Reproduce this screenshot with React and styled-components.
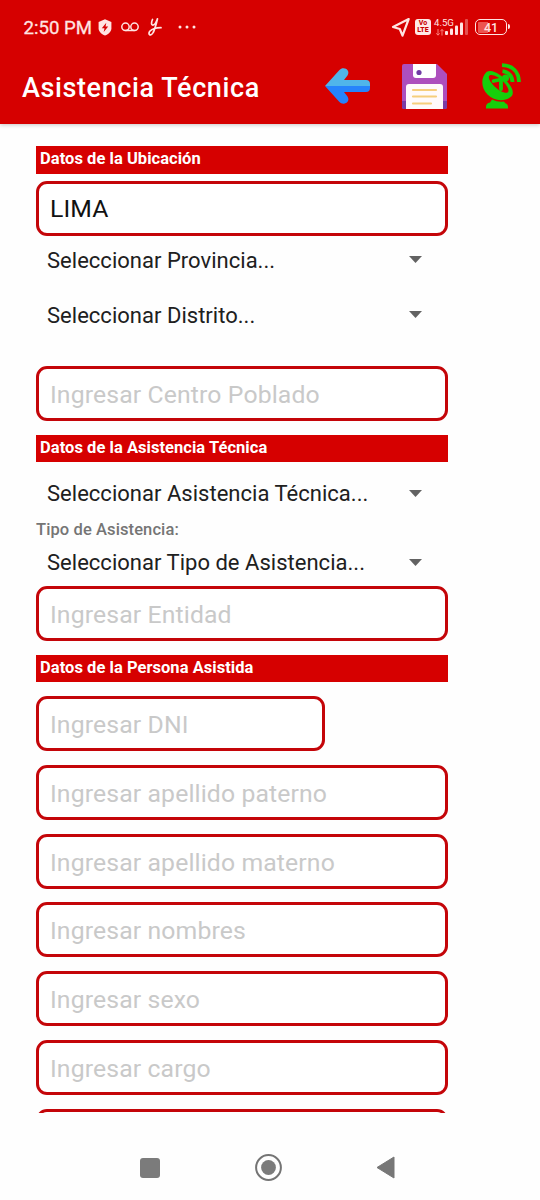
import React from "react";
import styled, { createGlobalStyle } from "styled-components";

const GlobalStyle = createGlobalStyle`
  *, *::before, *::after { box-sizing: border-box; }
  body { margin: 0; background: #fefefe; font-family: Roboto, "Liberation Sans", sans-serif; }
`;

const Screen = styled.div`
  display: flex;
  flex-direction: column;
  width: 540px;
  height: 1200px;
  overflow: hidden;
  background: #fefefe;
`;

const Header = styled.header`
  flex: none;
  height: 124px;
  background: #d60000;
  box-shadow: 0 1px 4px rgba(0, 0, 0, 0.22);
  color: #fff;
`;

const StatusBar = styled.div`
  display: flex;
  align-items: center;
  height: 54px;
  padding: 0 33px 0 23.5px;
  color: #ffe4e2;
`;

const Clock = styled.span`
  width: 74.5px;
  padding-top: 2px;
  font-size: 18.6px;
  line-height: 52px;
  font-weight: 400;
  white-space: nowrap;
  -webkit-text-stroke: 0.3px currentColor;
`;

const Glyph = styled.svg`
  display: block;
  flex: none;
  overflow: visible;
  width: ${(p) => p.$w}px;
  height: ${(p) => p.$h}px;
  margin-left: ${(p) => p.$left || 0}px;
`;

const Spacer = styled.div`
  flex: 1;
`;

const VolteBadge = styled.div`
  display: flex;
  flex-direction: column;
  align-items: center;
  justify-content: center;
  width: 16px;
  height: 16px;
  margin-left: 5px;
  border-radius: 3px;
  background: #ffe9e7;
  color: #c80000;
  font-size: 7px;
  line-height: 7px;
  font-weight: 800;
`;

const Network = styled.div`
  display: flex;
  flex-direction: column;
  width: 20px;
  height: 20px;
  margin-left: 3px;
  font-size: 9.6px;
  line-height: 12px;
  white-space: nowrap;
`;

const Battery = styled.div`
  position: relative;
  width: 32px;
  height: 16px;
  margin-left: 6px;
  border: 1.6px solid #ffe4e2;
  border-radius: 5px;
  background: linear-gradient(to right, transparent 2px, #ec5450 2px, #ec5450 12px, transparent 12px) content-box;
  padding: 1.5px 0;
  font-size: 12.5px;
  line-height: 11px;
  font-weight: 500;
  text-align: center;

  &::after {
    content: "";
    position: absolute;
    right: -4.2px;
    top: 3.6px;
    width: 2px;
    height: 5px;
    border-radius: 0 2px 2px 0;
    background: #ffe4e2;
  }
`;

const AppBar = styled.div`
  display: flex;
  align-items: center;
  height: 64px;
  padding-left: 22px;
`;

const Title = styled.h1`
  width: 303px;
  margin: 0;
  padding-top: 4px;
  font-size: 27px;
  line-height: 60px;
  font-weight: 500;
  letter-spacing: 0.6px;
  white-space: nowrap;
`;

const Form = styled.main`
  flex: none;
  display: flex;
  flex-direction: column;
  height: 989px;
  padding: 22px 91.7px 0 36px;
  overflow: hidden;
`;

const SectionBar = styled.h2`
  flex: none;
  height: 27.5px;
  margin: ${(p) => p.$top || 0}px 0 0;
  padding-left: 4px;
  background: #d60000;
  color: #fff;
  font-size: 16.5px;
  line-height: 25.4px;
  font-weight: 700;
  letter-spacing: 0.04px;
  white-space: nowrap;
`;

const Input = styled.input`
  flex: none;
  display: block;
  width: ${(p) => p.$width || 412.3}px;
  height: 55px;
  margin: ${(p) => p.$top}px 0 0;
  padding: ${(p) => (p.defaultValue ? 0 : 2)}px 11px 0;
  border: 3px solid #c40509;
  border-radius: 11px;
  background: #fff;
  outline: none;
  color: #111;
  font: 400 24.75px/30px Roboto, "Liberation Sans", sans-serif;
  letter-spacing: 0.13px;

  &::placeholder { color: #c9c9c9; opacity: 1; }
`;

const Spinner = styled.div`
  flex: none;
  display: flex;
  align-items: center;
  justify-content: space-between;
  height: 48px;
  margin-top: ${(p) => p.$top}px;
  padding: 0 26px 0 11px;
  color: #202020;
  font-size: 22px;
  letter-spacing: 0.02px;
  white-space: nowrap;
`;

const Label = styled.div`
  flex: none;
  height: 20px;
  margin-top: ${(p) => p.$top}px;
  color: #757575;
  font-size: 16.5px;
  line-height: 22px;
  font-weight: 500;
  letter-spacing: 0.1px;
`;

const NavBar = styled.nav`
  flex: 1;
  display: flex;
  align-items: center;
  padding: 22px 0 0 140px;
`;

const SpinnerText = styled.span`
  padding-top: ${(p) => p.$drop}px;
`;

const Select = ({ top, drop = 0, children }) => (
  <Spinner $top={top}>
    <SpinnerText $drop={drop}>{children}</SpinnerText>
    <Glyph $w={13} $h={7} viewBox="0 0 13 7"><path d="M0 0h13L6.5 7Z" fill="#626262" /></Glyph>
  </Spinner>
);

const ShieldIcon = () => (
  <Glyph $w={14} $h={17} viewBox="0 0 14 17">
    <path d="M7 .3 13.400 3v6.200c0 3.300-2.600 5.800-6.400 7.400C3.200 15 .6 12.500 .6 9.200V3Z" fill="#ffe4e2" />
    <path d="M8.300 3.800 3.800 9.200h2.700L5.700 13l4.500-5.400H7.500Z" fill="#d60000" />
  </Glyph>
);

const VoicemailIcon = () => (
  <Glyph $w={18} $h={10} $left={9} viewBox="0 0 18 10" fill="none" stroke="#ffe4e2" strokeWidth="1.5">
    <circle cx="4.5" cy="4.8" r="3.7" /><circle cx="13.5" cy="4.8" r="3.7" /><path d="M4.500 8.500h9" />
  </Glyph>
);

const ScriptIcon = () => (
  <Glyph $w={14} $h={18} $left={9} viewBox="0 0 14 18" fill="none" stroke="#ffe4e2" strokeWidth="1.7" strokeLinecap="round" strokeLinejoin="round">
    <path d="M4.500 1.500C3.300 4 3 7 4.700 7.200 6.500 7.300 8.300 4 9.500.8 8.500 5 7 11 5.200 14.500c-1.300 2.700-3.800 3-4.200 1.300C.7 13.500 3.700 11.500 6.500 10.500c2.300-.8 4.500-.8 6.500-.8" />
  </Glyph>
);

const MoreIcon = () => (
  <Glyph $w={18} $h={4} $left={16} viewBox="0 0 18 4" fill="#ffe4e2">
    <circle cx="2" cy="2" r="1.5" /><circle cx="9" cy="2" r="1.5" /><circle cx="16" cy="2" r="1.5" />
  </Glyph>
);

const LocationIcon = () => (
  <Glyph $w={18} $h={19} viewBox="0 0 18 19">
    <path d="M16.700 1 1 9l6.800 2 2.700 6.700Z" fill="none" stroke="#ffe4e2" strokeWidth="2.2" strokeLinejoin="round" />
  </Glyph>
);

const DataIcon = () => (
  <Glyph $w={8} $h={7} $left={2} viewBox="0 0 8 7" fill="none" stroke="#ff8d89" strokeWidth=".9">
    <path d="M2 0v6M.3 4.300 2 6.200l1.700-1.900M6 6.500V.5M4.300 2.300 6 .4l1.700 1.900" />
  </Glyph>
);

const SignalIcon = () => (
  <Glyph $w={24} $h={16} $left={-9} viewBox="0 0 24 16" fill="#ffe4e2">
    <rect x="0" y="12" width="3" height="4" rx="1" />
    <rect x="5" y="9.5" width="3" height="6.5" rx="1" />
    <rect x="10" y="6.5" width="3" height="9.5" rx="1" />
    <rect x="15" y="3.5" width="3" height="12.5" rx="1" />
    <rect x="20" y="0" width="3" height="16" rx="1" opacity=".35" />
  </Glyph>
);

const BackArrowIcon = () => (
  <Glyph $w={45} $h={36} viewBox="0 0 45 36">
    <path d="M0 18 14 2.500c4.500-5 12-.5 8.500 5L19 12H41q4 0 4 4v2Z" fill="#50b5ea" />
    <path d="M0 18h45v2q0 4-4 4H19l3.500 4.500c3.500 5.500-4 10-8.500 5Z" fill="#2684fc" />
  </Glyph>
);

const SaveIcon = () => (
  <Glyph $w={45} $h={45} $left={32} viewBox="0 0 45 45">
    <path d="M2 0h33l10 10v33q0 2-2 2H2q-2 0-2-2V2Q0 0 2 0Z" fill="#ad4fbd" />
    <path d="M0 37h5v8H2q-2 0-2-2ZM40 37h5v6q0 2-2 2h-3Z" fill="#7b3ca5" />
    <path d="M11 0h23v11q0 3-3 3H14q-3 0-3-3Z" fill="#fff" />
    <circle cx="17" cy="8.5" r="2.6" fill="#713ba5" />
    <path d="M7 20h31q3 0 3 3v22H4V23q0-3 3-3Z" fill="#fffafb" />
    <path d="M11 26h23M11 32.500h23M11 39.500h18" fill="none" stroke="#f6ce7c" strokeWidth="2.2" strokeLinecap="round" />
  </Glyph>
);

const SatelliteIcon = () => (
  <Glyph $w={40} $h={46} $left={35} viewBox="0 0 40 46">
    <path d="M4.500 9C-1.500 15-1 25 5.500 31.500c7 7 18 7.500 24.300 1.500 2-2.500 1-7-2.300-11.500C22 13 10 5 4.500 9Z" fill="#16cf0b" />
    <path d="M7.500 12.500C10.500 10.800 17 14 22 19.500c4.500 5 5.500 9 3.500 10-2.500 1.200-8.500-1.500-13-6s-7-9.500-5-11Z" fill="#d60000" />
    <path d="m11.500 18 12.500-2.500M19 17.500v8.500" fill="none" stroke="#16cf0b" strokeWidth="3.8" strokeLinecap="round" />
    <circle cx="23.500" cy="15" r="3.500" fill="#16cf0b" />
    <path d="M20.500 8.200c6 .8 9.800 4.800 10 10.800M20 2.200C31 2.500 36.800 9 37 19" fill="none" stroke="#16cf0b" strokeWidth="3.8" />
    <path d="M4 45.500v-1.500q0-4 4-4.500l2-3q6 3 12 2l1 1.500q3 1 3 4v1.500Z" fill="#16cf0b" />
  </Glyph>
);

const personFields = [
  "Ingresar apellido paterno",
  "Ingresar apellido materno",
  "Ingresar nombres",
  "Ingresar sexo",
  "Ingresar cargo",
];

export default function App() {
  return (
    <Screen>
      <GlobalStyle />
      <Header>
        <StatusBar>
          <Clock>2:50 PM</Clock>
          <ShieldIcon />
          <VoicemailIcon />
          <ScriptIcon />
          <MoreIcon />
          <Spacer />
          <LocationIcon />
          <VolteBadge><span>Vo</span><span>LTE</span></VolteBadge>
          <Network>4.5G<DataIcon /></Network>
          <SignalIcon />
          <Battery>41</Battery>
        </StatusBar>
        <AppBar>
          <Title>Asistencia Técnica</Title>
          <BackArrowIcon />
          <SaveIcon />
          <SatelliteIcon />
        </AppBar>
      </Header>
      <Form>
        <SectionBar>Datos de la Ubicación</SectionBar>
        <Input $top={7} defaultValue="LIMA" />
        <Select top={0} drop={1}>Seleccionar Provincia...</Select>
        <Select top={7} drop={1}>Seleccionar Distrito...</Select>
        <Input $top={27.3} placeholder="Ingresar Centro Poblado" />
        <SectionBar $top={13.75}>Datos de la Asistencia Técnica</SectionBar>
        <Select top={7}>Seleccionar Asistencia Técnica...</Select>
        <Label $top={2}>Tipo de Asistencia:</Label>
        <Select top={-1}>Seleccionar Tipo de Asistencia...</Select>
        <Input $top={0} placeholder="Ingresar Entidad" />
        <SectionBar $top={13.75}>Datos de la Persona Asistida</SectionBar>
        <Input $top={13.75} $width={289} placeholder="Ingresar DNI" />
        {personFields.map((text) => (
          <Input key={text} $top={13.75} placeholder={text} />
        ))}
        <Input $top={13.75} />
      </Form>
      <NavBar>
        <Glyph $w={20} $h={20} viewBox="0 0 20 20"><rect width="20" height="20" rx="3" fill="#7b7b7b" /></Glyph>
        <Glyph $w={27} $h={27} $left={94.5} viewBox="0 0 27 27">
          <circle cx="13.5" cy="13.5" r="12.4" fill="none" stroke="#747474" strokeWidth="2" />
          <circle cx="13.5" cy="13.5" r="7.4" fill="#7b7b7b" />
        </Glyph>
        <Glyph $w={19} $h={23} $left={94.5} viewBox="0 0 19 23"><path d="M18 1v21L1 11.500Z" fill="#777" stroke="#777" strokeLinejoin="round" /></Glyph>
      </NavBar>
    </Screen>
  );
}
